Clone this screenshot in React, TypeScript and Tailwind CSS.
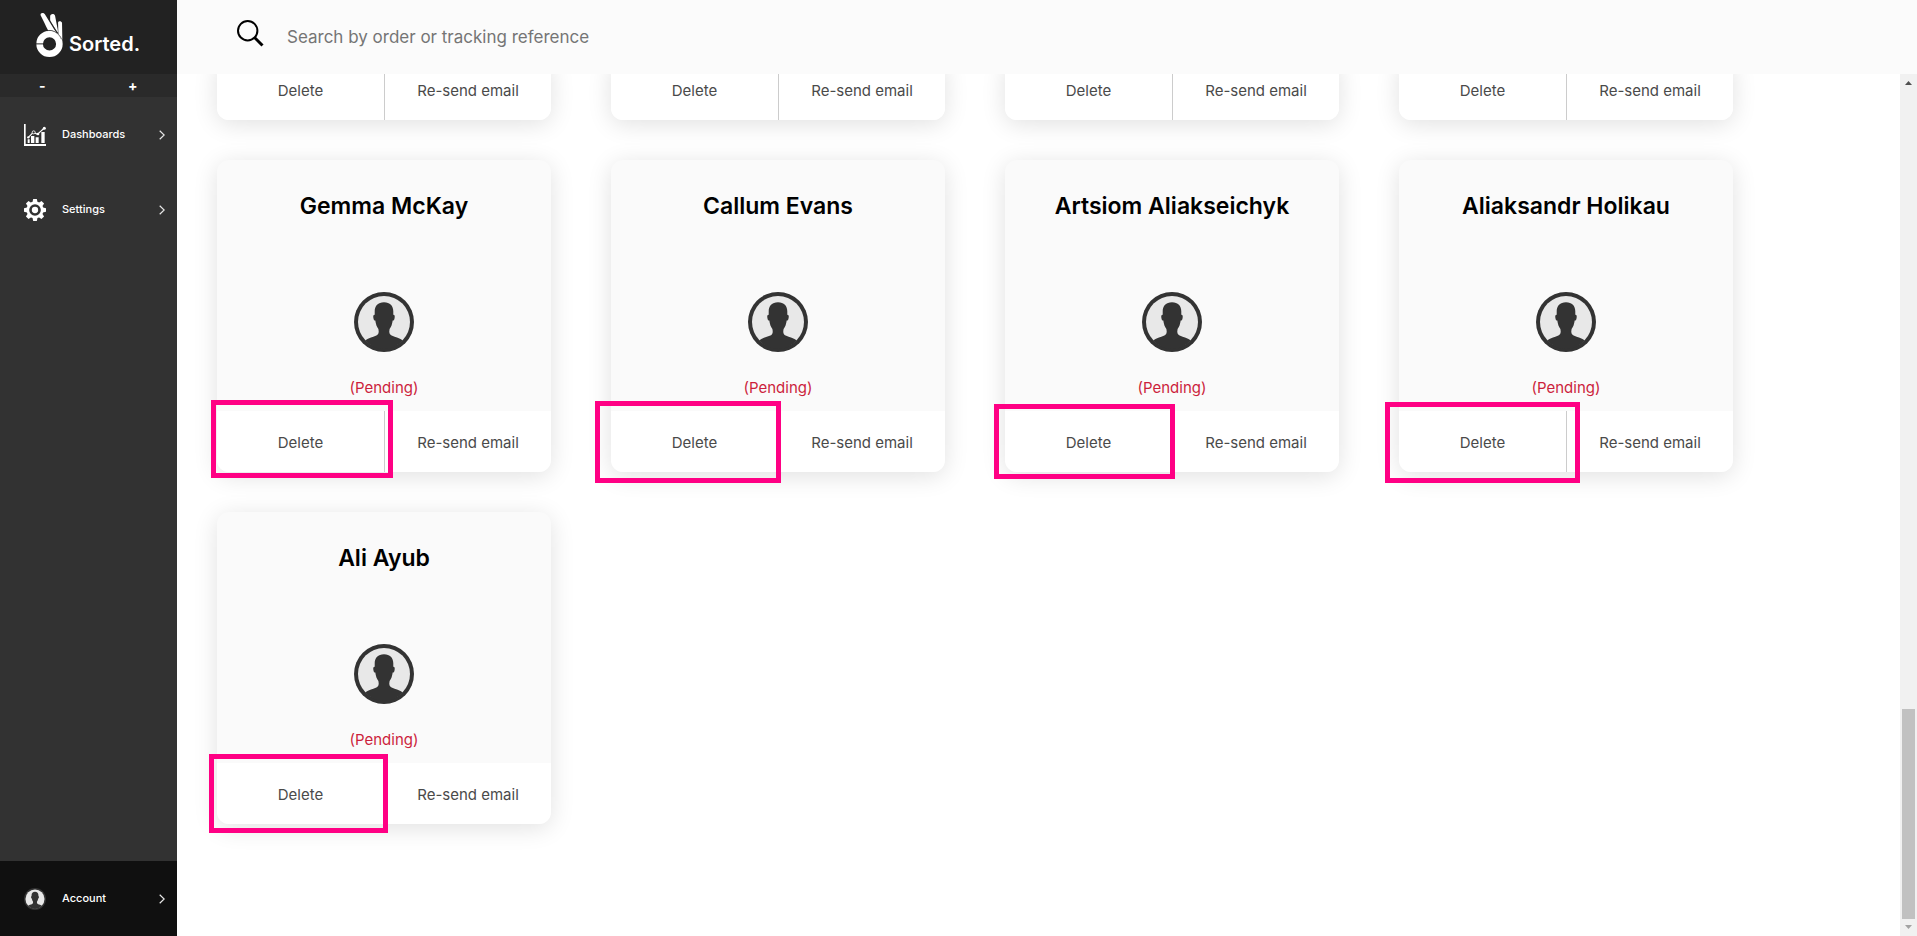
import { useState } from 'react';

type Highlight = string;

interface User {
  name: string;
  highlight: Highlight;
}

const users: User[] = [
  { name: 'Gemma McKay', highlight: '-left-1.5 -top-[11px] h-[78px] w-[182px]' },
  { name: 'Callum Evans', highlight: '-left-4 -top-2.5 h-[82px] w-[186px]' },
  { name: 'Artsiom Aliakseichyk', highlight: '-left-[11px] -top-[7px] h-[75px] w-[181px]' },
  { name: 'Aliaksandr Holikau', highlight: '-left-3.5 -top-[9px] h-[81px] w-[195px]' },
  { name: 'Ali Ayub', highlight: '-left-2 -top-[9px] h-[79px] w-[179px]' },
];

function Avatar({ className }: { className: string }) {
  return (
    <svg viewBox="0 0 60 60" className={className} aria-hidden="true">
      <circle cx="30" cy="30" r="30" fill="#333333" />
      <circle cx="30" cy="30" r="26" fill="#e8e8e8" />
      <path
        fill="#333333"
        d="M30 10.3c-6 0-9.3 3.6-9.3 9.2v3.2c-1.6.1-1.6 1.6-1.3 3.2.2 1.5.7 2.6 1.9 2.7.5 3.7 1.5 6.5 3.1 8.5.8 3.7.1 5.4-2 6.3-4 1.7-8.5 2.6-11.3 5.1A26.5 26.5 0 0 0 30 57a26.5 26.5 0 0 0 18.9-8.5c-2.8-2.5-7.3-3.4-11.3-5.1-2.1-.9-2.8-2.6-2-6.3 1.6-2 2.6-4.8 3.1-8.5 1.2-.1 1.7-1.2 1.9-2.7.3-1.6.3-3.1-1.3-3.2v-3.2c0-5.6-3.3-9.2-9.3-9.2z"
      />
    </svg>
  );
}

function Chevron() {
  return (
    <svg viewBox="0 0 6 10" className="h-2.5 w-1.5" fill="none" stroke="#e8e8e8" strokeWidth="1.2" aria-hidden="true">
      <path d="M0.7 0.7 5.2 5 0.7 9.3" />
    </svg>
  );
}

function DashboardIcon() {
  return (
    <svg viewBox="0 0 66 66" className="size-[22px]" aria-hidden="true">
      <path d="M0 0h5v60h61v6H0z" fill="#fff" />
      <path d="M11 46h6v11h-6zM21 36h10v21H21zM35 40h9v17h-9zM52 24h10v33H52z" fill="#fff" />
      <path d="M13 40 28 25l12 6L61 12" fill="none" stroke="#fff" strokeWidth="3.5" />
      <circle cx="13" cy="40" r="3.5" fill="#fff" />
      <circle cx="29" cy="25" r="4.5" fill="#323232" stroke="#fff" strokeWidth="2.5" />
      <circle cx="42" cy="30" r="4" fill="#fff" />
      <circle cx="61" cy="13" r="4.5" fill="#fff" />
    </svg>
  );
}

const teeth = [0, 45, 90, 135, 180, 225, 270, 315];

function GearIcon() {
  return (
    <svg viewBox="0 0 66 66" className="size-[22px]" aria-hidden="true">
      {teeth.map((angle) => (
        <path key={angle} d="M25 12 27.5 0h11L41 12z" fill="#fff" transform={`rotate(${angle} 33 33)`} />
      ))}
      <circle cx="33" cy="33" r="21.5" fill="none" stroke="#fff" strokeWidth="8" />
      <circle cx="33" cy="33" r="9.5" fill="#fff" />
    </svg>
  );
}

function Logo() {
  return (
    <a href="#home" className="flex h-[74px] items-center bg-[#222222] pl-9 text-white">
      <svg viewBox="0 0 82 138" className="mb-1 h-[46px] w-[27px] shrink-0" aria-hidden="true">
        <g fill="#fff">
          <path d="M14 9C12 1 23 0 27 6l25 41c3 5 6 8 9 14-8-5-14-7-24-6-5-8-8-16-12-24z" />
          <path d="M43 13c-1-9 13-11 15-2l7 37c1 6 2 10 1 14L54 43 43 24z" />
          <path d="M67 31c1-6 11-5 12 1l1 52c-3-8-7-13-12-18z" />
        </g>
        <path d="M47 34 79 84" stroke="#222222" strokeWidth="1.5" />
        <circle cx="41" cy="96" r="30" fill="none" stroke="#fff" strokeWidth="20" />
        <path d="M0 96h22" stroke="#222222" strokeWidth="3" />
        <path d="M33 56c18-4 36 6 44 26" fill="none" stroke="#222222" strokeWidth="1.5" />
      </svg>
      <span className="mt-3.5 ml-1.5 text-xl leading-6 font-semibold">Sorted.</span>
    </a>
  );
}

function NavItem({ label, icon, className = '' }: { label: string; icon: React.ReactNode; className?: string }) {
  return (
    <a
      href={`#${label.toLowerCase()}`}
      className={`flex h-[75px] items-center pr-3 pl-6 text-[11px] font-medium text-white ${className}`}
    >
      {icon}
      <span className="ml-4 flex-1">{label}</span>
      <Chevron />
    </a>
  );
}

function Sidebar() {
  return (
    <aside className="flex w-[177px] shrink-0 flex-col bg-[#323232]">
      <Logo />
      <div className="grid h-[23px] grid-cols-2 bg-[#2a2a2a] text-sm leading-5 font-bold text-white">
        <button type="button" aria-label="Decrease text size" className="pr-1">-</button>
        <button type="button" aria-label="Increase text size">+</button>
      </div>
      <nav className="flex flex-1 flex-col">
        <NavItem label="Dashboards" icon={<DashboardIcon />} />
        <NavItem label="Settings" icon={<GearIcon />} />
        <NavItem label="Account" icon={<Avatar className="size-[22px]" />} className="mt-auto bg-[#101010]" />
      </nav>
    </aside>
  );
}

function SearchBar() {
  const [query, setQuery] = useState('');
  return (
    <header className="flex h-[74px] shrink-0 items-center bg-[#fbfbfb] pl-[60px]">
      <svg viewBox="0 0 27 27" className="mb-2 size-[27px] shrink-0" fill="none" stroke="#000" aria-hidden="true">
        <circle cx="10.7" cy="10.7" r="9.7" strokeWidth="2" />
        <path d="M17.5 17.5 25.5 25.5" strokeWidth="3" />
      </svg>
      <input
        type="search"
        aria-label="Search by order or tracking reference"
        placeholder="Search by order or tracking reference"
        value={query}
        onChange={(e) => setQuery(e.target.value)}
        className="ml-[23px] h-10 flex-1 bg-transparent text-[17px] text-black outline-none placeholder:text-[#757575]"
      />
    </header>
  );
}

function CardActions({ highlight }: { highlight?: Highlight }) {
  return (
    <div className="relative grid h-[61px] grid-cols-2 rounded-b-xl bg-white text-[15px] text-[#4a4a4a]">
      <button type="button" className="pt-1">Delete</button>
      <button type="button" className="border-l border-[#cccccc] pt-1">Re-send email</button>
      {highlight && <span className={`pointer-events-none absolute border-5 border-[#ff0084] ${highlight}`} />}
    </div>
  );
}

function UserCard({ user }: { user: User }) {
  return (
    <article className="rounded-xl bg-[#fafafa] shadow-[0_4px_24px_rgba(0,0,0,0.12)]">
      <div className="flex h-[251px] flex-col items-center">
        <h2 className="mt-7 text-[23px] leading-9 font-semibold text-black">{user.name}</h2>
        <Avatar className="mt-[68px] size-[60px]" />
        <p className="mt-6 text-[15px] leading-6 text-[#cc1f3c]">(Pending)</p>
      </div>
      <CardActions highlight={user.highlight} />
    </article>
  );
}

function Scrollbar() {
  return (
    <div className="flex w-[17px] shrink-0 flex-col items-center bg-[#f1f1f1]" aria-hidden="true">
      <svg viewBox="0 0 17 17" className="size-[17px]">
        <path d="M5 11 8.5 7 12 11z" fill="#505050" />
      </svg>
      <div className="flex flex-1 flex-col justify-end">
        <div className="h-[210px] w-[13px] bg-[#c1c1c1]" />
      </div>
      <svg viewBox="0 0 17 17" className="size-[17px]">
        <path d="M5 6 8.5 10 12 6z" fill="#a3a3a3" />
      </svg>
    </div>
  );
}

export default function App() {
  return (
    <div className="flex h-screen bg-white font-['Inter','Liberation_Sans',sans-serif]">
      <Sidebar />
      <div className="flex min-w-0 flex-1 flex-col">
        <SearchBar />
        <div className="flex min-h-0 flex-1">
          <main className="flex min-w-0 flex-1 flex-col justify-end overflow-hidden px-10 pb-28">
            <div className="grid grid-cols-[repeat(auto-fill,334px)] gap-x-[60px] gap-y-10">
              {[1, 2, 3, 4].map((id) => (
                <article key={id} className="rounded-xl shadow-[0_4px_24px_rgba(0,0,0,0.12)]">
                  <CardActions />
                </article>
              ))}
              {users.map((user) => (
                <UserCard key={user.name} user={user} />
              ))}
            </div>
          </main>
          <Scrollbar />
        </div>
      </div>
    </div>
  );
}
